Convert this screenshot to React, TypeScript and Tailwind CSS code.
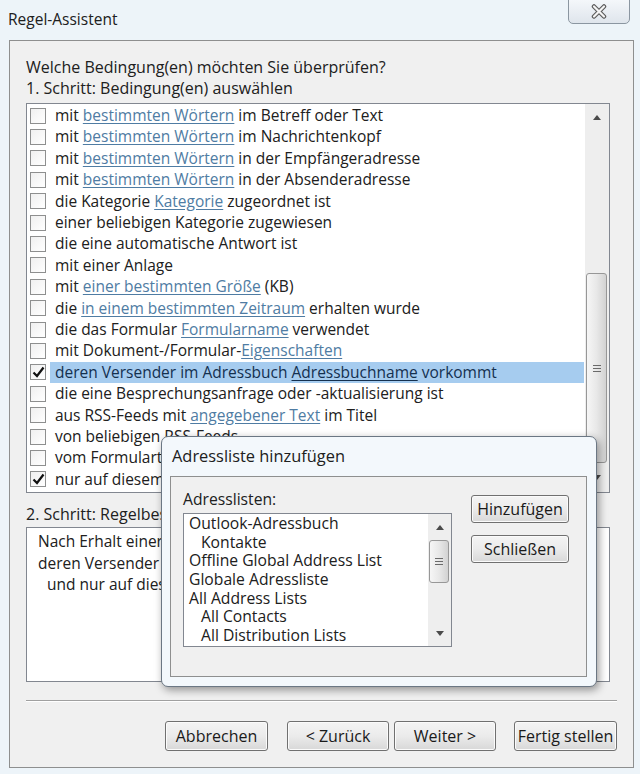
import React from "react";

type Part = string | { l: string };

const CONDITIONS: { checked?: boolean; selected?: boolean; parts: Part[] }[] = [
  { parts: ["mit ", { l: "bestimmten Wörtern" }, " im Betreff oder Text"] },
  { parts: ["mit ", { l: "bestimmten Wörtern" }, " im Nachrichtenkopf"] },
  { parts: ["mit ", { l: "bestimmten Wörtern" }, " in der Empfängeradresse"] },
  { parts: ["mit ", { l: "bestimmten Wörtern" }, " in der Absenderadresse"] },
  { parts: ["die Kategorie ", { l: "Kategorie" }, " zugeordnet ist"] },
  { parts: ["einer beliebigen Kategorie zugewiesen"] },
  { parts: ["die eine automatische Antwort ist"] },
  { parts: ["mit einer Anlage"] },
  { parts: ["mit ", { l: "einer bestimmten Größe" }, " (KB)"] },
  { parts: ["die ", { l: "in einem bestimmten Zeitraum" }, " erhalten wurde"] },
  { parts: ["die das Formular ", { l: "Formularname" }, " verwendet"] },
  { parts: ["mit Dokument-/Formular-", { l: "Eigenschaften" }] },
  { checked: true, selected: true, parts: ["deren Versender im Adressbuch ", { l: "Adressbuchname" }, " vorkommt"] },
  { parts: ["die eine Besprechungsanfrage oder -aktualisierung ist"] },
  { parts: ["aus RSS-Feeds mit ", { l: "angegebener Text" }, " im Titel"] },
  { parts: ["von beliebigen RSS-Feeds"] },
  { parts: ["vom Formulartyp ", { l: "Formularname" }] },
  { checked: true, parts: ["nur auf diesem Computer"] },
];

const ADDRESS_LISTS = [
  { name: "Outlook-Adressbuch" },
  { name: "Kontakte", indent: true },
  { name: "Offline Global Address List" },
  { name: "Globale Adressliste" },
  { name: "All Address Lists" },
  { name: "All Contacts", indent: true },
  { name: "All Distribution Lists", indent: true },
];

function WinButton({ children, className = "" }: { children: React.ReactNode; className?: string }) {
  return (
    <div
      className={`flex items-center justify-center rounded-[3px] border border-[#707070] bg-gradient-to-b from-[#f4f4f4] via-[#ebebeb] to-[#d8d8d8] shadow-[inset_0_0_0_1px_#fbfbfb] text-[16px] text-[#1a1a1a] ${className}`}
    >
      {children}
    </div>
  );
}

function Arrow({ down }: { down?: boolean }) {
  return (
    <svg width="8" height="5" viewBox="0 0 8 5">
      <path d={down ? "M0 0 L8 0 L4 5 Z" : "M0 5 L8 5 L4 0 Z"} fill="#4a4a4a" />
    </svg>
  );
}

function Grip() {
  return (
    <svg width="8" height="7" viewBox="0 0 8 7">
      <path d="M0 0.5 H8 M0 3.5 H8 M0 6.5 H8" stroke="#6a6a6a" strokeWidth="1" />
    </svg>
  );
}

function Thumb({ className = "" }: { className?: string }) {
  return (
    <div
      className={`flex items-center justify-center rounded-[3px] border border-[#979797] bg-gradient-to-r from-[#f6f6f6] via-[#e8e8e8] to-[#d2d2d2] ${className}`}
    >
      <Grip />
    </div>
  );
}

function Checkbox({ checked }: { checked?: boolean }) {
  return (
    <div className="ml-[3px] flex h-[16px] w-[16px] shrink-0 items-center justify-center border border-[#8e8f8f] bg-gradient-to-br from-[#f0f0f0] to-white">
      {checked && (
        <svg width="13" height="12" viewBox="0 0 13 12">
          <path d="M1.5 6.5 L5 10 L11.5 1.5" fill="none" stroke="#111" strokeWidth="2.2" />
        </svg>
      )}
    </div>
  );
}

function CloseButton() {
  return (
    <div className="mr-[10px] mt-[-2px] flex h-[26px] w-[62px] items-center justify-center rounded-b-[5px] border border-[#8b96a1] bg-gradient-to-b from-[#f5f8fb] to-[#dfe5ec]">
      <svg width="18" height="15" viewBox="0 0 18 15">
        <path d="M4 2.5 L14 12.5 M14 2.5 L4 12.5" stroke="#5b5b5b" strokeWidth="4.5" strokeLinecap="round" />
        <path d="M4 2.5 L14 12.5 M14 2.5 L4 12.5" stroke="#f4f4f4" strokeWidth="2.2" strokeLinecap="round" />
      </svg>
    </div>
  );
}

export default function App() {
  return (
    <div className="relative h-[774px] w-[640px] overflow-hidden bg-[#edf4f9] font-['Open_Sans',sans-serif] text-[#202020]">
      {/* title bar */}
      <div className="flex h-[40px] items-start justify-between">
        <span className="pl-[8px] pt-[9px] text-[15.5px] leading-[21px]">Regel-Assistent</span>
        <CloseButton />
      </div>

      {/* wizard body */}
      <div className="ml-[9px] mr-[6px] flex h-[728px] flex-col border border-[#8e8f8f] bg-[#f0f0f0] px-[16px] pt-[16px] text-[15.5px]">
        <p className="h-[21px] whitespace-nowrap text-[16px] leading-[21px]">Welche Bedingung(en) möchten Sie überprüfen?</p>
        <p className="h-[21px] whitespace-nowrap text-[16px] leading-[21px]">1. Schritt: Bedingung(en) auswählen</p>

        <div className="mr-[7px] mt-[4px] flex h-[390px] border border-[#828790] bg-white">
          <div className="flex min-w-0 flex-1 flex-col overflow-hidden pt-[1px]">
            {CONDITIONS.map((row, i) => (
              <div key={i} className="flex h-[21.4px] items-center">
                <Checkbox checked={row.checked} />
                <div
                  className={`ml-[4px] mr-[1px] flex h-full flex-1 items-center whitespace-nowrap pl-[5px] ${
                    row.selected ? "bg-[#a6ccef] text-[#14304f]" : ""
                  }`}
                >
                  {row.parts.map((p, j) =>
                    typeof p === "string" ? (
                      <span key={j} className="whitespace-pre">{p}</span>
                    ) : (
                      <span
                        key={j}
                        className={`underline underline-offset-2 ${
                          row.selected ? "text-[#14304f]" : "text-[#4f7ca3]"
                        }`}
                      >
                        {p.l}
                      </span>
                    )
                  )}
                </div>
              </div>
            ))}
          </div>
          <div className="flex w-[24px] flex-col bg-[#eeeeee]">
            <div className="flex h-[26px] items-center justify-center">
              <Arrow />
            </div>
            <div className="h-[143px]" />
            <Thumb className="ml-[1px] h-[190px] w-[21px]" />
            <div className="flex flex-1 items-center justify-center">
              <Arrow down />
            </div>
          </div>
        </div>

        <p className="mt-[11px] h-[21px] whitespace-nowrap text-[16px] leading-[21px]">2. Schritt: Regelbeschreibung bearbeiten</p>
        <div className="mr-[7px] mt-[2px] h-[155px] overflow-hidden border border-[#828790] bg-white pl-[11px] pt-[3px]">
          <p className="h-[21.5px] whitespace-nowrap leading-[21.5px]">Nach Erhalt einer Nachricht</p>
          <p className="h-[21.5px] whitespace-nowrap leading-[21.5px]">
            deren Versender im Adressbuch <span className="text-[#4f7ca3] underline underline-offset-2">Kontakte</span> vorkommt
          </p>
          <p className="h-[21.5px] whitespace-nowrap pl-[9px] leading-[21.5px]">und nur auf diesem Computer</p>
        </div>

        <div className="mt-[18px] h-px bg-[#a0a0a0]" />
        <div className="h-px bg-white" />

        <div className="mt-[19px] flex justify-end">
          <WinButton className="h-[30px] w-[103px]">Abbrechen</WinButton>
          <WinButton className="ml-[19px] h-[30px] w-[102px]">&lt; Zurück</WinButton>
          <WinButton className="ml-[5px] h-[30px] w-[102px]">Weiter &gt;</WinButton>
          <WinButton className="ml-[18px] h-[30px] w-[103px]">Fertig stellen</WinButton>
        </div>
      </div>

      {/* overlay dialog */}
      <div className="absolute left-[161px] top-[436px] flex h-[251px] w-[436px] flex-col rounded-[7px] border border-[#6b7784] bg-[#f3f8fc] shadow-[2px_3px_9px_rgba(0,0,0,0.4)]">
        <div className="flex h-[39px] items-center whitespace-nowrap pl-[10px] text-[16.4px]">Adressliste hinzufügen</div>
        <div className="ml-[8px] mr-[9px] flex h-[201px] items-start border border-[#8e8f8f] bg-[#f0f0f0] pl-[12px] text-[15.7px]">
          <div className="mt-[13px] flex flex-col">
            <span className="h-[18px] whitespace-nowrap leading-[18px]">Adresslisten:</span>
            <div className="mt-[5px] flex h-[134px] w-[269px] border border-[#828790] bg-white">
              <div className="flex min-w-0 flex-1 flex-col overflow-hidden">
                {ADDRESS_LISTS.map((a) => (
                  <div
                    key={a.name}
                    className={`h-[18.7px] whitespace-nowrap leading-[18.7px] ${a.indent ? "pl-[17px]" : "pl-[5px]"}`}
                  >
                    {a.name}
                  </div>
                ))}
              </div>
              <div className="flex w-[23px] flex-col bg-[#eeeeee]">
                <div className="flex h-[26px] items-center justify-center">
                  <Arrow />
                </div>
                <Thumb className="ml-[1px] h-[43px] w-[20px]" />
                <div className="flex-1" />
                <div className="flex h-[26px] items-center justify-center">
                  <Arrow down />
                </div>
              </div>
            </div>
          </div>
          <div className="ml-[19px] mt-[18px] flex flex-col gap-[12px]">
            <WinButton className="h-[28px] w-[98px]">Hinzufügen</WinButton>
            <WinButton className="h-[28px] w-[98px]">Schließen</WinButton>
          </div>
        </div>
      </div>
    </div>
  );
}
